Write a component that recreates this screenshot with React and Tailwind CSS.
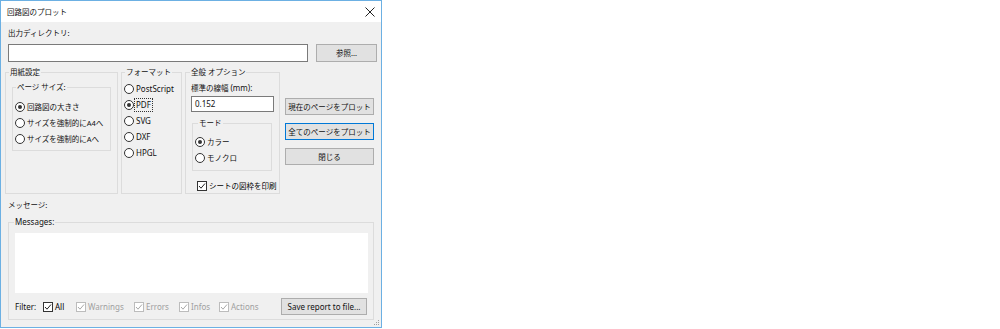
import React from 'react'

const font = { fontFamily: '"Noto Sans", "Noto Sans CJK JP", sans-serif' }

function Radio({ checked, label, focus, latin }) {
  return (
    <div className={'flex items-center h-[16px] pl-[2px] whitespace-nowrap ' + (latin ? 'text-[8px]' : '')}>
      <span className="w-[10px] h-[10px] rounded-full border border-[#333] bg-white flex items-center justify-center shrink-0">
        {checked && <span className="w-[4px] h-[4px] rounded-full bg-[#333]" />}
      </span>
      <span className={focus ? 'ml-[1px] px-[1px] outline outline-1 outline-dotted outline-[#333]' : 'ml-[2px]'}>{label}</span>
    </div>
  )
}

function Check({ label, disabled, latin }) {
  const c = disabled ? '#bcbcbc' : '#333'
  return (
    <div className={'flex items-center h-[16px] whitespace-nowrap ' + (latin ? 'text-[8px]' : '')}>
      <span className="w-[10px] h-[10px] border bg-white flex items-center justify-center shrink-0" style={{ borderColor: c }}>
        <svg width="8" height="8" viewBox="0 0 8 8">
          <path d="M1 4 L3 6.2 L7 1.5" stroke={disabled ? '#a8a8a8' : '#222'} strokeWidth="1" fill="none" />
        </svg>
      </span>
      <span className={'ml-[2px] ' + (disabled ? 'text-[#a0a0a0]' : 'text-black')}>{label}</span>
    </div>
  )
}

function Btn({ children, w, focused, latin }) {
  return (
    <div
      className={
        'h-[17px] flex items-center justify-center whitespace-nowrap bg-[#e1e1e1] border ' +
        (focused ? 'border-[#0078d7] ' : 'border-[#adadad] ') +
        (latin ? 'text-[8px]' : '')
      }
      style={{ width: w }}
    >
      {children}
    </div>
  )
}

function Group({ label, className, legendClass = 'ml-[3px]', children }) {
  return (
    <fieldset className={'border border-[#dcdcdc] min-w-0 ' + className}>
      <legend className={'px-[1px] h-[12px] leading-[12px] whitespace-nowrap ' + legendClass}>{label}</legend>
      {children}
    </fieldset>
  )
}

export default function App() {
  return (
    <div className="w-[1000px] h-[329px] bg-white text-[7.5px] leading-[12px] text-[#111]" style={font}>
      <div className="relative w-[382px] h-[328px] border border-[#6cb0e3] flex flex-col">
        <div className="h-[21px] bg-white flex items-center justify-between pl-[6px] pr-[6px]">
          <span>回路図のプロット</span>
          <svg width="10" height="10" viewBox="0 0 10 10">
            <path d="M0.5 0.5 L9.5 9.5 M9.5 0.5 L0.5 9.5" stroke="#222" strokeWidth="1" />
          </svg>
        </div>

        <div className="flex-1 bg-[#f0f0f0] flex flex-col pl-[4px]">
          <div className="mt-[5px] ml-[3px] h-[12px]">出力ディレクトリ:</div>
          <div className="mt-[5px] flex items-center">
            <div className="ml-[3px] w-[300px] h-[18px] border border-[#7a7a7a] bg-white" />
            <div className="ml-[8px]">
              <div className="w-[61px] h-[18px] flex items-center justify-center bg-[#e1e1e1] border border-[#adadad]">参照...</div>
            </div>
          </div>

          <div className="mt-[4px] flex items-start">
            <Group label="用紙設定" className="w-[113px] h-[128px]">
              <div className="pt-[3px] pl-[6px]">
                <Group label="ページ サイズ:" className="w-[99px] h-[70px]">
                  <div className="pt-[6px]">
                    <Radio checked label="回路図の大きさ" />
                    <Radio label="サイズを強制的にA4へ" />
                    <Radio label="サイズを強制的にAへ" />
                  </div>
                </Group>
              </div>
            </Group>

            <Group label="フォーマット" className="ml-[3px] w-[61px] h-[128px]">
              <div className="pt-[3px]">
                <Radio latin label="PostScript" />
                <Radio latin checked focus label="PDF" />
                <Radio latin label="SVG" />
                <Radio latin label="DXF" />
                <Radio latin label="HPGL" />
              </div>
            </Group>

            <Group label="全般 オプション" className="ml-[3px] w-[95px] h-[128px]" legendClass="ml-[4px]">
              <div className="mt-[4px] ml-[5px] h-[12px] whitespace-nowrap">標準の線幅 <span className="text-[8px]">(mm):</span></div>
              <div className="mt-[2px] ml-[5px] w-[83px] h-[16px] border border-[#7a7a7a] bg-white flex items-center pl-[3px] text-[8px]">0.152</div>
              <div className="mt-[5px] ml-[6px]">
                <Group label="モード" className="w-[80px] h-[54px]" legendClass="ml-[5px]">
                  <div className="pt-[5px]">
                    <Radio checked label="カラー" />
                    <Radio label="モノクロ" />
                  </div>
                </Group>
              </div>
              <div className="mt-[7px] ml-[11px]">
                <Check label="シートの図枠を印刷" />
              </div>
            </Group>

            <div className="ml-[5px] pt-[32px] flex flex-col gap-[8px]">
              <Btn w={89}>現在のページをプロット</Btn>
              <Btn w={89} focused>全てのページをプロット</Btn>
              <Btn w={89}>閉じる</Btn>
            </div>
          </div>

          <div className="mt-[5px] ml-[3px] h-[12px]">メッセージ:</div>
          <div className="mt-[5px] ml-[3px]">
            <Group label={<span className="text-[8px]">Messages:</span>} className="w-[366px] h-[104px]" legendClass="ml-[5px]">
              <div className="mt-[5px] ml-[6px] w-[353px] h-[60px] bg-white" />
              <div className="mt-[5px] ml-[6px] flex items-center text-[8px]">
                <div className="w-[28px]">Filter:</div>
                <div className="w-[33px]"><Check latin label="All" /></div>
                <div className="w-[58px]"><Check latin label="Warnings" disabled /></div>
                <div className="w-[45px]"><Check latin label="Errors" disabled /></div>
                <div className="w-[40px]"><Check latin label="Infos" disabled /></div>
                <div className="w-[62px]"><Check latin label="Actions" disabled /></div>
                <Btn w={86} latin>Save report to file...</Btn>
              </div>
            </Group>
          </div>
        </div>

        <svg className="absolute right-[1px] bottom-[1px]" width="7" height="7" viewBox="0 0 7 7">
          <rect x="5" y="1" width="1" height="1" fill="#a0a0a0" />
          <rect x="3" y="3" width="1" height="1" fill="#a0a0a0" />
          <rect x="5" y="3" width="1" height="1" fill="#a0a0a0" />
          <rect x="1" y="5" width="1" height="1" fill="#a0a0a0" />
          <rect x="3" y="5" width="1" height="1" fill="#a0a0a0" />
          <rect x="5" y="5" width="1" height="1" fill="#a0a0a0" />
        </svg>
      </div>
    </div>
  )
}
